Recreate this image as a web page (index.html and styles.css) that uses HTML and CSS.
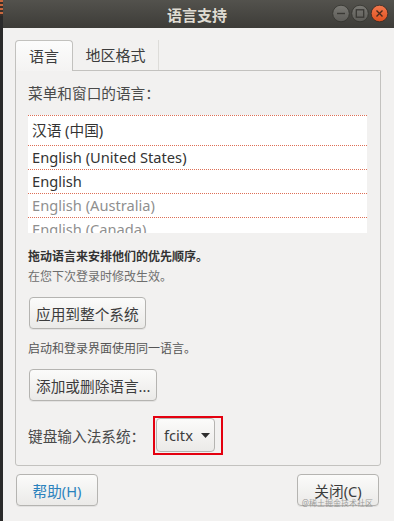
FILE: index.html
```html
<!DOCTYPE html>
<html lang="zh-CN">
<head>
    <meta charset="UTF-8">
    <meta name="viewport" content="width=device-width, initial-scale=1.0">
    <title>语言支持</title>
    <link rel="stylesheet" href="styles.css">
</head>
<body>
    <div class="screen">
        <div class="desktop-edge"><span class="desktop-icon"></span></div>

        <div class="window">
            <header class="titlebar">
                <span></span>
                <span class="title">语言支持</span>
                <svg class="win-controls" width="58" height="20" viewBox="0 0 58 20">
                    <defs>
                        <linearGradient id="grey" x1="0" y1="0" x2="0" y2="1">
                            <stop offset="0" stop-color="#7a7974"/>
                            <stop offset="1" stop-color="#5c5b57"/>
                        </linearGradient>
                        <linearGradient id="orange" x1="0" y1="0" x2="0" y2="1">
                            <stop offset="0" stop-color="#f37a4f"/>
                            <stop offset="1" stop-color="#e0501f"/>
                        </linearGradient>
                    </defs>
                    <!-- minimize -->
                    <circle cx="10" cy="10.5" r="8.3" fill="url(#grey)" stroke="#34332f" stroke-width="0.8"/>
                    <line x1="6" y1="10.5" x2="14" y2="10.5" stroke="#3a3935" stroke-width="1.4"/>
                    <!-- maximize -->
                    <circle cx="29" cy="10.5" r="8.3" fill="url(#grey)" stroke="#34332f" stroke-width="0.8"/>
                    <rect x="25.3" y="6.8" width="7.4" height="7.4" fill="none" stroke="#3a3935" stroke-width="1.3"/>
                    <!-- close -->
                    <circle cx="48.5" cy="10.5" r="8.3" fill="url(#orange)" stroke="#3a2a22" stroke-width="0.8"/>
                    <path d="M45.5 7.5 L51.5 13.5 M51.5 7.5 L45.5 13.5" stroke="#4a2a1c" stroke-width="1.4"/>
                </svg>
            </header>

            <main class="content">
                <div class="notebook">
                    <div class="tabs">
                        <div class="tab active">语言</div>
                        <div class="tab">地区格式</div>
                    </div>

                    <section class="page">
                        <div class="label">菜单和窗口的语言：</div>

                        <ul class="lang-list">
                            <li class="lang first">汉语 (中国)</li>
                            <li class="lang">English (United States)</li>
                            <li class="lang">English</li>
                            <li class="lang muted">English (Australia)</li>
                            <li class="lang muted">English (Canada)</li>
                        </ul>

                        <p class="hint strong">拖动语言来安排他们的优先顺序。</p>
                        <p class="hint faded">在您下次登录时修改生效。</p>

                        <div class="row-btn"><button class="btn">应用到整个系统</button></div>

                        <p class="hint spaced">启动和登录界面使用同一语言。</p>

                        <div class="row-btn"><button class="btn">添加或删除语言...</button></div>

                        <div class="im-row">
                            <span class="label">键盘输入法系统：</span>
                            <span class="highlight">
                                <button class="combo">fcitx
                                    <svg width="9" height="5" viewBox="0 0 9 5"><path d="M0 0 L9 0 L4.5 5 Z" fill="#2e2e2e"/></svg>
                                </button>
                            </span>
                        </div>
                    </section>
                </div>

                <div class="dialog-actions">
                    <button class="btn wide help">帮助(H)</button>
                    <button class="btn wide">关闭(C)</button>
                    <span class="watermark">@稀土掘金技术社区</span>
                </div>
            </main>
        </div>
    </div>
</body>
</html>
```

FILE: styles.css
```css
:root {
    --window-bg: #f2f1f0;
    --frame-border: #c3c2bf;
    --text: #3c3c3c;
    --text-muted: #6e6e6e;
    --drop-line: #dd6f56;
}

* {
    margin: 0;
    padding: 0;
    box-sizing: border-box;
}

body {
    font-family: "Noto Sans", "Noto Sans CJK SC", sans-serif;
    color: var(--text);
    background: #2b2b2b;
    width: 394px;
    height: 521px;
    overflow: hidden;
}

.screen {
    display: flex;
    height: 521px;
}

.desktop-edge {
    width: 3px;
    background: #2a2a2a;
}

.desktop-icon {
    display: block;
    height: 16px;
    background: repeating-linear-gradient(#c8683e 0 2px, #3a2e28 2px 4px);
}

.window {
    flex: 1;
    display: flex;
    flex-direction: column;
    background: var(--window-bg);
}

/* title bar */
.titlebar {
    height: 28px;
    display: grid;
    grid-template-columns: 1fr auto 1fr;
    align-items: center;
    background: linear-gradient(#53524d, #3d3c38);
    padding-right: 5px;
}

.title {
    color: #dfdbd2;
    font-size: 15px;
    font-weight: bold;
    padding-left: 2px;
}

.win-controls {
    justify-self: end;
    margin-top: -3px;
}

/* body */
.content {
    flex: 1;
    padding: 12px 13px 0 12px;
}

.tabs {
    display: flex;
    height: 30px;
}

.tab {
    font-size: 15px;
    line-height: 30px;
    white-space: nowrap;
    text-align: center;
}

.tab.active {
    width: 58px;
    height: 31px;
    line-height: 30px;
    background: linear-gradient(#fcfcfc, #f4f3f2);
    border: 1px solid #c2c1be;
    border-bottom: none;
    border-radius: 4px 4px 0 0;
    position: relative;
    z-index: 1;
}

.tab:not(.active) {
    width: 86px;
    border-right: 1px solid #dddcd9;
    line-height: 31px;
}

.page {
    border: 1px solid var(--frame-border);
    border-radius: 0 0 3px 3px;
    padding: 12px 13px 10px 12px;
}

.label {
    font-size: 14.67px;
    line-height: 20px;
    color: #4a4a4a;
}

.lang-list {
    list-style: none;
    margin-top: 12px;
    background: white;
    height: 118px;
    overflow: hidden;
}

.lang {
    border-top: 1px dotted var(--drop-line);
    height: 24px;
    line-height: 23px;
    padding-left: 4px;
    font-size: 14.67px;
    color: #333;
}

.lang.first {
    height: 30px;
    line-height: 29px;
}

.lang.muted {
    color: #8f8f8f;
}

.hint {
    font-size: 12px;
    line-height: 18px;
    color: #555;
}

.hint.strong {
    margin-top: 15px;
    font-weight: bold;
    color: #333;
}

.hint.faded {
    margin-top: 2px;
    color: var(--text-muted);
}

.hint.spaced {
    margin-top: 11px;
}

.row-btn {
    margin-top: 11px;
    padding-left: 1px;
}

.btn {
    font-family: inherit;
    font-size: 14.67px;
    color: var(--text);
    height: 32px;
    padding: 0 6px;
    background: linear-gradient(#fbfbfa, #ebeae8);
    border: 1px solid #b5b4b1;
    border-radius: 4px;
    box-shadow: 0 1px 0 rgb(0 0 0 / 0.06);
}

.im-row {
    display: flex;
    align-items: center;
    margin-top: 15px;
}

.im-row .label {
    width: 125px;
}

.highlight {
    display: inline-flex;
    border: 2px solid #e4000f;
    padding: 0 6px 1px 1px;
}

.combo {
    display: flex;
    align-items: center;
    gap: 8px;
    font-family: inherit;
    font-size: 14.67px;
    color: var(--text);
    width: 59px;
    height: 34px;
    padding: 0 0 0 7px;
    background: linear-gradient(#fbfbfa, #ebeae8);
    border: 1px solid #b5b4b1;
    border-radius: 4px;
}

.dialog-actions {
    position: relative;
    display: flex;
    justify-content: space-between;
    margin-top: 8px;
    padding: 0 2px 0 1px;
}

.btn.wide {
    width: 82px;
}

.btn.help {
    color: #2a82bd;
}

.watermark {
    position: absolute;
    right: 8px;
    top: 23px;
    font-size: 8px;
    color: rgb(120 120 120 / 0.7);
    pointer-events: none;
}
```
